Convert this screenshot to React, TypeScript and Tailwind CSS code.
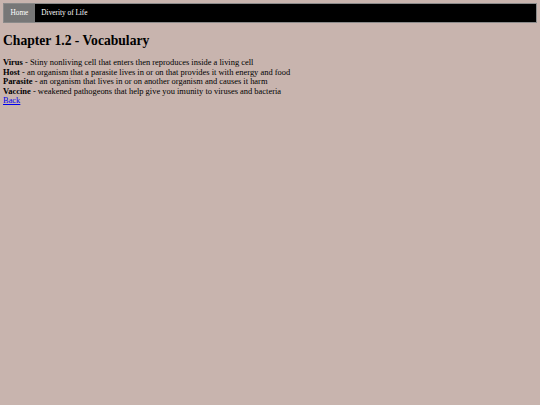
export default function App() {
  return (
    <div className="min-h-[405px] bg-[#c8b4ae] p-[3px] text-black" style={{ fontFamily: '"Liberation Serif", "Times New Roman", serif' }}>
      <nav className="flex h-[20px] border border-[#8a8a8a] bg-black text-[7.3px] font-normal text-white">
        <a className="flex items-center bg-[#777777] px-[6.5px] pt-[1px]">Home</a>
        <a className="flex items-center px-[6.5px] pt-[1px]">Diverity of Life</a>
      </nav>
      <h1 className="mt-[9px] mb-[9px] text-[13.6px] font-bold leading-[17px]">Chapter 1.2 - Vocabulary</h1>
      <div className="text-[8.45px] leading-[9.6px]">
        <p><b>Virus</b> - Stiny nonliving cell that enters then reproduces inside a living cell</p>
        <p><b>Host</b> - an organism that a parasite lives in or on that provides it with energy and food</p>
        <p><b>Parasite</b> - an organism that lives in or on another organism and causes it harm</p>
        <p><b>Vaccine</b> - weakened pathogeons that help give you imunity to viruses and bacteria</p>
        <a href="#" className="text-[#0000ee] underline">Back</a>
      </div>
    </div>
  );
}
